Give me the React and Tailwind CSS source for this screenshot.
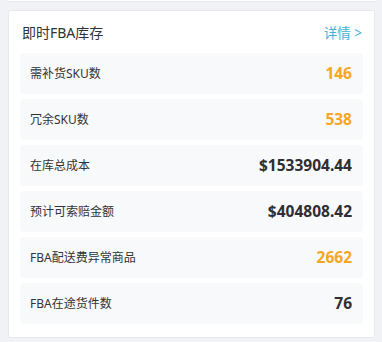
import React from "react";

const rows = [
  { label: "需补货SKU数", value: "146", orange: true },
  { label: "冗余SKU数", value: "538", orange: true },
  { label: "在库总成本", value: "$1533904.44", orange: false },
  { label: "预计可索赔金额", value: "$404808.42", orange: false },
  { label: "FBA配送费异常商品", value: "2662", orange: true },
  { label: "FBA在途货件数", value: "76", orange: false },
];

export default function App() {
  return (
    <div
      className="w-[382px] h-[342px] bg-[#f0f2f5] overflow-hidden"
      style={{ fontFamily: '"Noto Sans", "Noto Sans CJK SC", sans-serif' }}
    >
      <div className="ml-[8px] w-[367px] h-[2px] bg-white border-b border-[#e4e7ec]" />
      <div className="ml-[8px] mt-[8px] w-[367px] h-[328px] bg-white border border-[#e8eaef] rounded-[2px] px-[11px]">
        <div className="flex items-start justify-between pt-[12px] h-[42px] pl-[2px] pr-[1px]">
          <span className="text-[14px] leading-[20px] text-[#333]">即时FBA库存</span>
          <span className="text-[13.5px] leading-[20px] text-[#3fb1d8]">详情 &gt;</span>
        </div>
        <div className="flex flex-col gap-[5px]">
          {rows.map((r) => (
            <div
              key={r.label}
              className="h-[41px] bg-[#f8f9fa] rounded-[4px] flex items-center justify-between pl-[10px] pr-[11px]"
            >
              <span className="text-[12px] text-[#333]">{r.label}</span>
              <span
                className={
                  "text-[15.5px] font-bold " +
                  (r.orange ? "text-[#f5a623]" : "text-[#2e2e33]")
                }
              >
                {r.value}
              </span>
            </div>
          ))}
        </div>
      </div>
    </div>
  );
}
